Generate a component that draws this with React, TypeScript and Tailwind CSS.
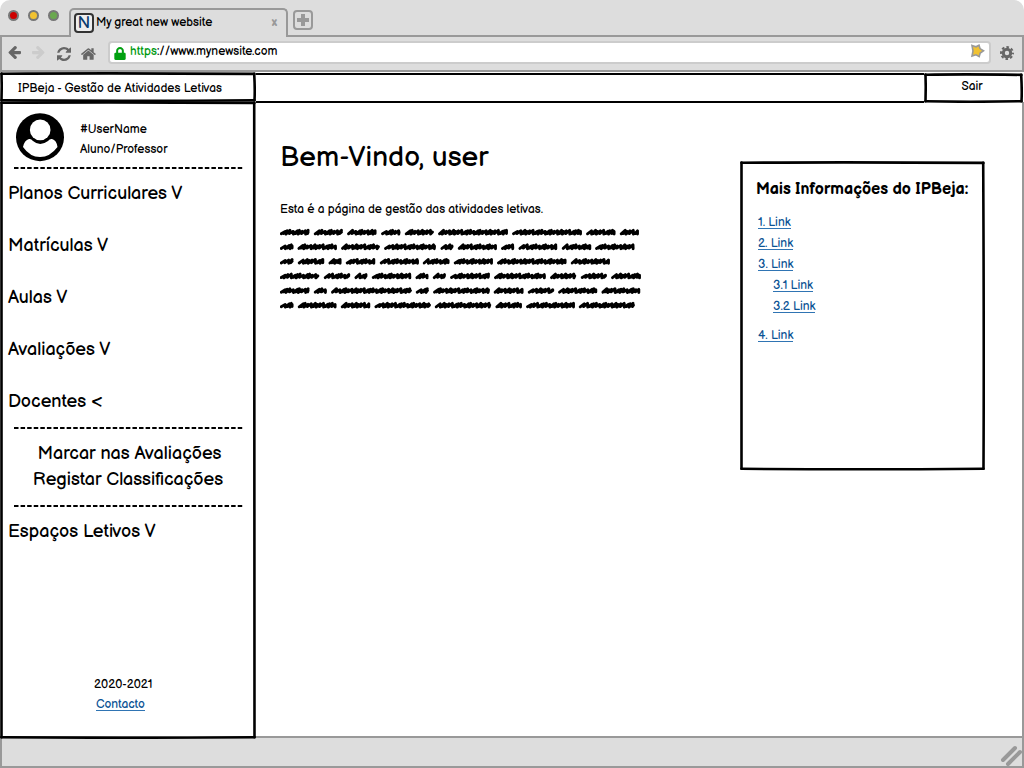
import React from "react";
import { FaLock } from "react-icons/fa";

const squiggles: [number, number][][] = [
  [[30, 118], [132, 218], [232, 319], [334, 391], [405, 491], [505, 713], [727, 935], [949, 1036], [1050, 1106]],
  [[30, 70], [83, 200], [214, 329], [343, 497], [512, 550], [564, 680], [694, 732], [746, 861], [876, 963], [976, 1093]],
  [[30, 70], [84, 162], [176, 214], [228, 315], [330, 446], [459, 538], [552, 668], [682, 889], [903, 1019]],
  [[30, 147], [162, 240], [254, 292], [306, 423], [437, 475], [489, 527], [541, 659], [673, 827], [841, 918], [933, 1010], [1024, 1112]],
  [[30, 118], [132, 170], [184, 425], [438, 476], [490, 659], [672, 760], [774, 852], [865, 981], [995, 1110]],
  [[30, 70], [84, 199], [213, 300], [314, 482], [495, 663], [677, 755], [769, 914], [927, 1094]],
];

function scribble(x1: number, x2: number, y: number, seed: number) {
  const end = x2 - 1.2;
  let x = x1 + 1.2;
  let d = `M${x.toFixed(1)} ${(y + 1.3).toFixed(1)}`;
  let i = seed;
  while (x < end - 2) {
    const up = 1.1 + ((i * 7) % 3) * 0.55;
    d += `L${Math.min(x + 4, end).toFixed(1)} ${(y - up).toFixed(1)}`;
    x += 2 + ((i * 5) % 4) * 0.7;
    d += `L${Math.min(x, end).toFixed(1)} ${(y + 1 + (i % 2) * 0.6).toFixed(1)}`;
    i++;
  }
  return d + `L${end.toFixed(1)} ${(y - 0.4).toFixed(1)}`;
}

const arrowPath =
  "M1536 640v128q0 53-32.5 90.5t-84.5 37.5h-704l293 294q38 36 38 90t-38 90l-75 76q-37 37-90 37-52 0-91-37l-651-652q-37-37-37-90 0-52 37-91l651-650q38-38 91-38 52 0 90 38l75 74q38 38 38 91t-38 91l-293 293h704q52 0 84.5 37.5t32.5 90.5z";
const refreshPath =
  "M1639 1056q0 5-1 7-64 268-268 434.5t-478 166.5q-146 0-282.5-55t-243.5-157l-129 129q-19 19-45 19t-45-19-19-45v-448q0-26 19-45t45-19h448q26 0 45 19t19 45-19 45l-137 137q71 66 161 102t187 36q134 0 250-65t186-179q11-17 53-117 8-23 30-23h192q13 0 22.5 9.5t9.5 22.5zm25-800v448q0 26-19 45t-45 19h-448q-26 0-45-19t-19-45 19-45l138-138q-148-137-349-137-134 0-250 65t-186 179q-11 17-53 117-8 23-30 23h-199q-13 0-22.5-9.5t-9.5-22.5v-7q65-268 270-434.5t480-166.5q146 0 284 55.5t245 156.5l130-129q19-19 45-19t45 19 19 45z";
const homePath =
  "M1408 992v480q0 26-19 45t-45 19h-384v-384h-256v384h-384q-26 0-45-19t-19-45v-480q0-1 .5-3t.5-3l575-474 575 474q1 2 1 6zm223-69l-62 74q-8 9-21 11h-3q-13 0-21-7l-692-577-692 577q-12 8-24 7-13-2-21-11l-62-74q-8-10-7-23.5t11-21.5l719-599q32-26 76-26t76 26l244 204v-195q0-14 9-23t23-9h192q14 0 23 9t9 23v408l219 182q10 8 11 21.5t-7 23.5z";

function Glyph({ d, box, className }: { d: string; box: string; className: string }) {
  return (
    <svg viewBox={box} fill="currentColor" className={`shrink-0 overflow-visible ${className}`}>
      <path d={d} />
    </svg>
  );
}

function SketchFrame({ w, h, weight = 2.6 }: { w: number; h: number; weight?: number }) {
  return (
    <svg className="pointer-events-none absolute inset-0" width={w} height={h} fill="none" stroke="#000" strokeWidth={weight} strokeLinecap="round">
      <path d={`M1.5 1.8Q${w * 0.4} ${0.9} ${w - 1.6} 1.9`} />
      <path d={`M${w - 1.8} 1.8Q${w - 0.9} ${h * 0.6} ${w - 1.5} ${h - 1.8}`} />
      <path d={`M${w - 1.5} ${h - 1.8}Q${w * 0.5} ${h - 0.8} 1.5 ${h - 1.7}`} />
      <path d={`M1.5 ${h - 1.7}Q2 ${h * 0.45} 1.5 1.6`} />
    </svg>
  );
}

function Dashes() {
  return (
    <svg className="ml-px block" width="230" height="2" stroke="#000" strokeWidth="2">
      <path d="M0 1H230" strokeDasharray="4.5 2.08" />
    </svg>
  );
}

function MenuItem({ children }: { children: React.ReactNode }) {
  return <div className="h-[26px] pl-2 text-[18px] leading-[26px]">{children}</div>;
}

function TextLink({ children, className = "" }: { children: React.ReactNode; className?: string }) {
  return (
    <a className={`block w-fit border-b border-[#2f74b3] text-[12px] leading-[10px] text-[#0b5394] ${className}`}>{children}</a>
  );
}

export default function App() {
  return (
    <div className="h-[768px] w-[1024px] overflow-hidden bg-white font-['Balsamiq_Sans','Inter',sans-serif] font-normal text-black [font-feature-settings:'cv11'_1]">
      <div className="flex h-full flex-col overflow-hidden rounded-t-[10px] bg-[#ddd]">
        <div className="flex h-[37px] shrink-0">
          <div className="flex w-[69px] gap-[9px] border-b-2 border-[#999] pt-[10px] pl-2">
            <span className="size-[11px] rounded-full border-2 border-[#777] bg-[#c00]" />
            <span className="size-[11px] rounded-full border-2 border-[#777] bg-[#f1c232]" />
            <span className="size-[11px] rounded-full border-2 border-[#777] bg-[#6aa84f]" />
          </div>
          <div className="mt-2 flex w-[219px] rounded-t-[5px] border-x-2 border-t-2 border-[#999] pt-[3px] pl-[3px]">
            <span className="flex size-5 items-center justify-center rounded-[4px] border-2 border-[#333] bg-[#eee] pt-px text-[17px] leading-none text-[#0b3c6e]">N</span>
            <span className="ml-[2px] h-[20px] text-[12px] leading-[20px]">My great new website</span>
            <span className="mr-[9px] ml-auto text-[12px] leading-[19px] font-bold text-[#999]">x</span>
          </div>
          <div className="flex flex-1 border-b-2 border-[#999] pt-[10px] pl-[5px]">
            <svg width="20" height="20" fill="none" stroke="#999"><rect x="1" y="1" width="18" height="18" rx="3" strokeWidth="2" /><path d="M10 4v12M4 10h12" strokeWidth="4" /></svg>
          </div>
        </div>
        <div className="flex h-[35px] shrink-0 items-start border-x-2 border-b-2 border-[#999] pt-1 text-[#666]">
          <Glyph d={arrowPath} box="0 -64 1536 1536" className="mt-[5px] ml-[6px] size-[13px]" />
          <Glyph d={arrowPath} box="0 -64 1536 1536" className="mt-[5px] ml-[11px] size-[13px] -scale-x-100 text-[#ccc]" />
          <Glyph d={refreshPath} box="128 128 1536 1536" className="mt-[6px] ml-[12px] size-[14px]" />
          <Glyph d={homePath} box="64 128 1664 1536" className="mt-[6px] ml-[10px] h-[14px] w-[16px]" />
          <div className="ml-[11px] flex h-[23px] w-[883px] shrink-0 rounded-[4px] border-2 border-[#ccc] bg-white text-black">
            <FaLock className="mt-[4px] ml-1 h-[13px] w-[12px] text-[#00a010]" />
            <span className="ml-[4px] text-[12px] leading-[17px]"><span className="text-[#009a10]">https</span>://www.mynewsite.com</span>
            <svg className="mt-[1px] mr-[4px] ml-auto" width="15" height="14"><path d="M2 1.5L6 2.8L9 1.2L10 4.6L13.5 6.8L10.2 9L9.2 12.6L6 10.8L2 12L3 7Z" fill="#f1c232" stroke="#999" strokeWidth="1.6" /></svg>
          </div>
          <svg className="mt-[5px] ml-[9px] shrink-0" width="14" height="14" fill="none" stroke="currentColor">
            <circle cx="7" cy="7" r="3.7" strokeWidth="3" />
            <circle cx="7" cy="7" r="6" strokeWidth="2" strokeDasharray="2.6 2.112" strokeDashoffset="1.3" />
          </svg>
        </div>

        <div className="flex min-h-0 flex-1 flex-col bg-white">
          <div className="flex h-[30px] shrink-0">
            <div className="relative h-[30px] w-[256px] pt-[8px] pl-[18px] text-[12px] leading-[18px] tracking-[0.04px]">
              <SketchFrame w={256} h={30} />
              IPBeja - Gestão de Atividades Letivas
            </div>
            <div className="mt-px h-[30px] flex-1 border-y-2 border-black" />
            <div className="relative mt-px h-[30px] w-[100px] pt-[5px] pr-[4px] text-center text-[12px] leading-[18px]">
              <SketchFrame w={99} h={30} />
              Sair
            </div>
          </div>
          <div className="flex min-h-0 flex-1 border-r-2 border-[#999]">
            <aside className="relative -mt-px h-[638px] w-[256px] shrink-0">
              <SketchFrame w={256} h={638} />
              <div className="flex h-[66px] pt-[12px] pl-4">
                <svg width="48" height="49" viewBox="0 0 48 49">
                  <ellipse cx="24" cy="24.2" rx="24" ry="24" />
                  <circle cx="24.2" cy="16.9" r="10.3" fill="#fff" />
                  <path d="M7 34Q8.500 27 13 26Q15 25.500 17 28Q24 34 32 28Q34 25.500 36 26Q40.500 27 41.500 34Q34 44 24 44Q14 44 7 34Z" fill="#fff" />
                </svg>
                <div className="ml-4 pt-[7px] text-[12px] leading-5">
                  <div>#UserName</div>
                  <div>Aluno/Professor</div>
                </div>
              </div>
              <div className="pl-[13px]"><Dashes /></div>
              <nav className="pt-[12px]">
                <div className="flex flex-col gap-[26px]">
                  <MenuItem>Planos Curriculares V</MenuItem>
                  <MenuItem>Matrículas V</MenuItem>
                  <MenuItem>Aulas V</MenuItem>
                  <MenuItem>Avaliações V</MenuItem>
                  <MenuItem>Docentes &lt;</MenuItem>
                </div>
                <div className="mt-[12px] pl-[13px]"><Dashes /></div>
                <div className="mt-[12px] text-center text-[18px] leading-[26px]">
                  <div className="pl-[3px]">Marcar nas Avaliações</div>
                  <div>Registar Classificações</div>
                </div>
                <div className="mt-[12px] mb-[12px] pl-[13px]"><Dashes /></div>
                <MenuItem>Espaços Letivos V</MenuItem>
              </nav>
              <div className="mt-[131px] pl-[94px] text-[12px] leading-[18px]">2020-2021</div>
              <TextLink className="mt-[6px] ml-[96px]">Contacto</TextLink>
            </aside>
            <main className="flex flex-1">
              <div className="w-[484px] pl-[24px]">
                <h1 className="mt-[38px] text-[28px] leading-[36px] tracking-[0.1px]">Bem-Vindo, user</h1>
                <p className="mt-[25px] text-[12px] leading-[18px]">Esta é a página de gestão das atividades letivas.</p>
                <svg className="mt-[7px] block" width="366" height="88" fill="none" stroke="#000" strokeWidth="2.9" strokeLinecap="round" strokeLinejoin="round">
                  {squiggles.map((row, r) => row.map(([a, b], i) => (
                    <path key={`${r}-${i}`} d={scribble(a / 3 - 10, b / 3 - 10, 6.5 + r * 14.6, r * 3 + i)} />
                  )))}
                </svg>
              </div>
              <section className="relative mt-[59px] h-[309px] w-[245px] pl-4">
                <SketchFrame w={245} h={309.5} />
                <h2 className="pt-[17px] text-[16px] leading-6 font-bold whitespace-nowrap">Mais Informações do IPBeja:</h2>
                <div className="mt-[16px] flex flex-col gap-[10px] pl-[2px]">
                  <TextLink>1. Link</TextLink>
                  <TextLink>2. Link</TextLink>
                  <TextLink>3. Link</TextLink>
                  <TextLink className="ml-[15px]">3.1 Link</TextLink>
                  <TextLink className="ml-[15px]">3.2 Link</TextLink>
                  <TextLink className="mt-2">4. Link</TextLink>
                </div>
              </section>
            </main>
          </div>
        </div>
        <footer className="flex h-8 shrink-0 items-start justify-end border-2 border-[#999] bg-[#ddd]">
          <svg className="mt-[6px]" width="22" height="22" stroke="#999" strokeWidth="4" strokeLinecap="round"><path d="M3 16L15 4M8 20L20 8" /></svg>
        </footer>
      </div>
    </div>
  );
}
